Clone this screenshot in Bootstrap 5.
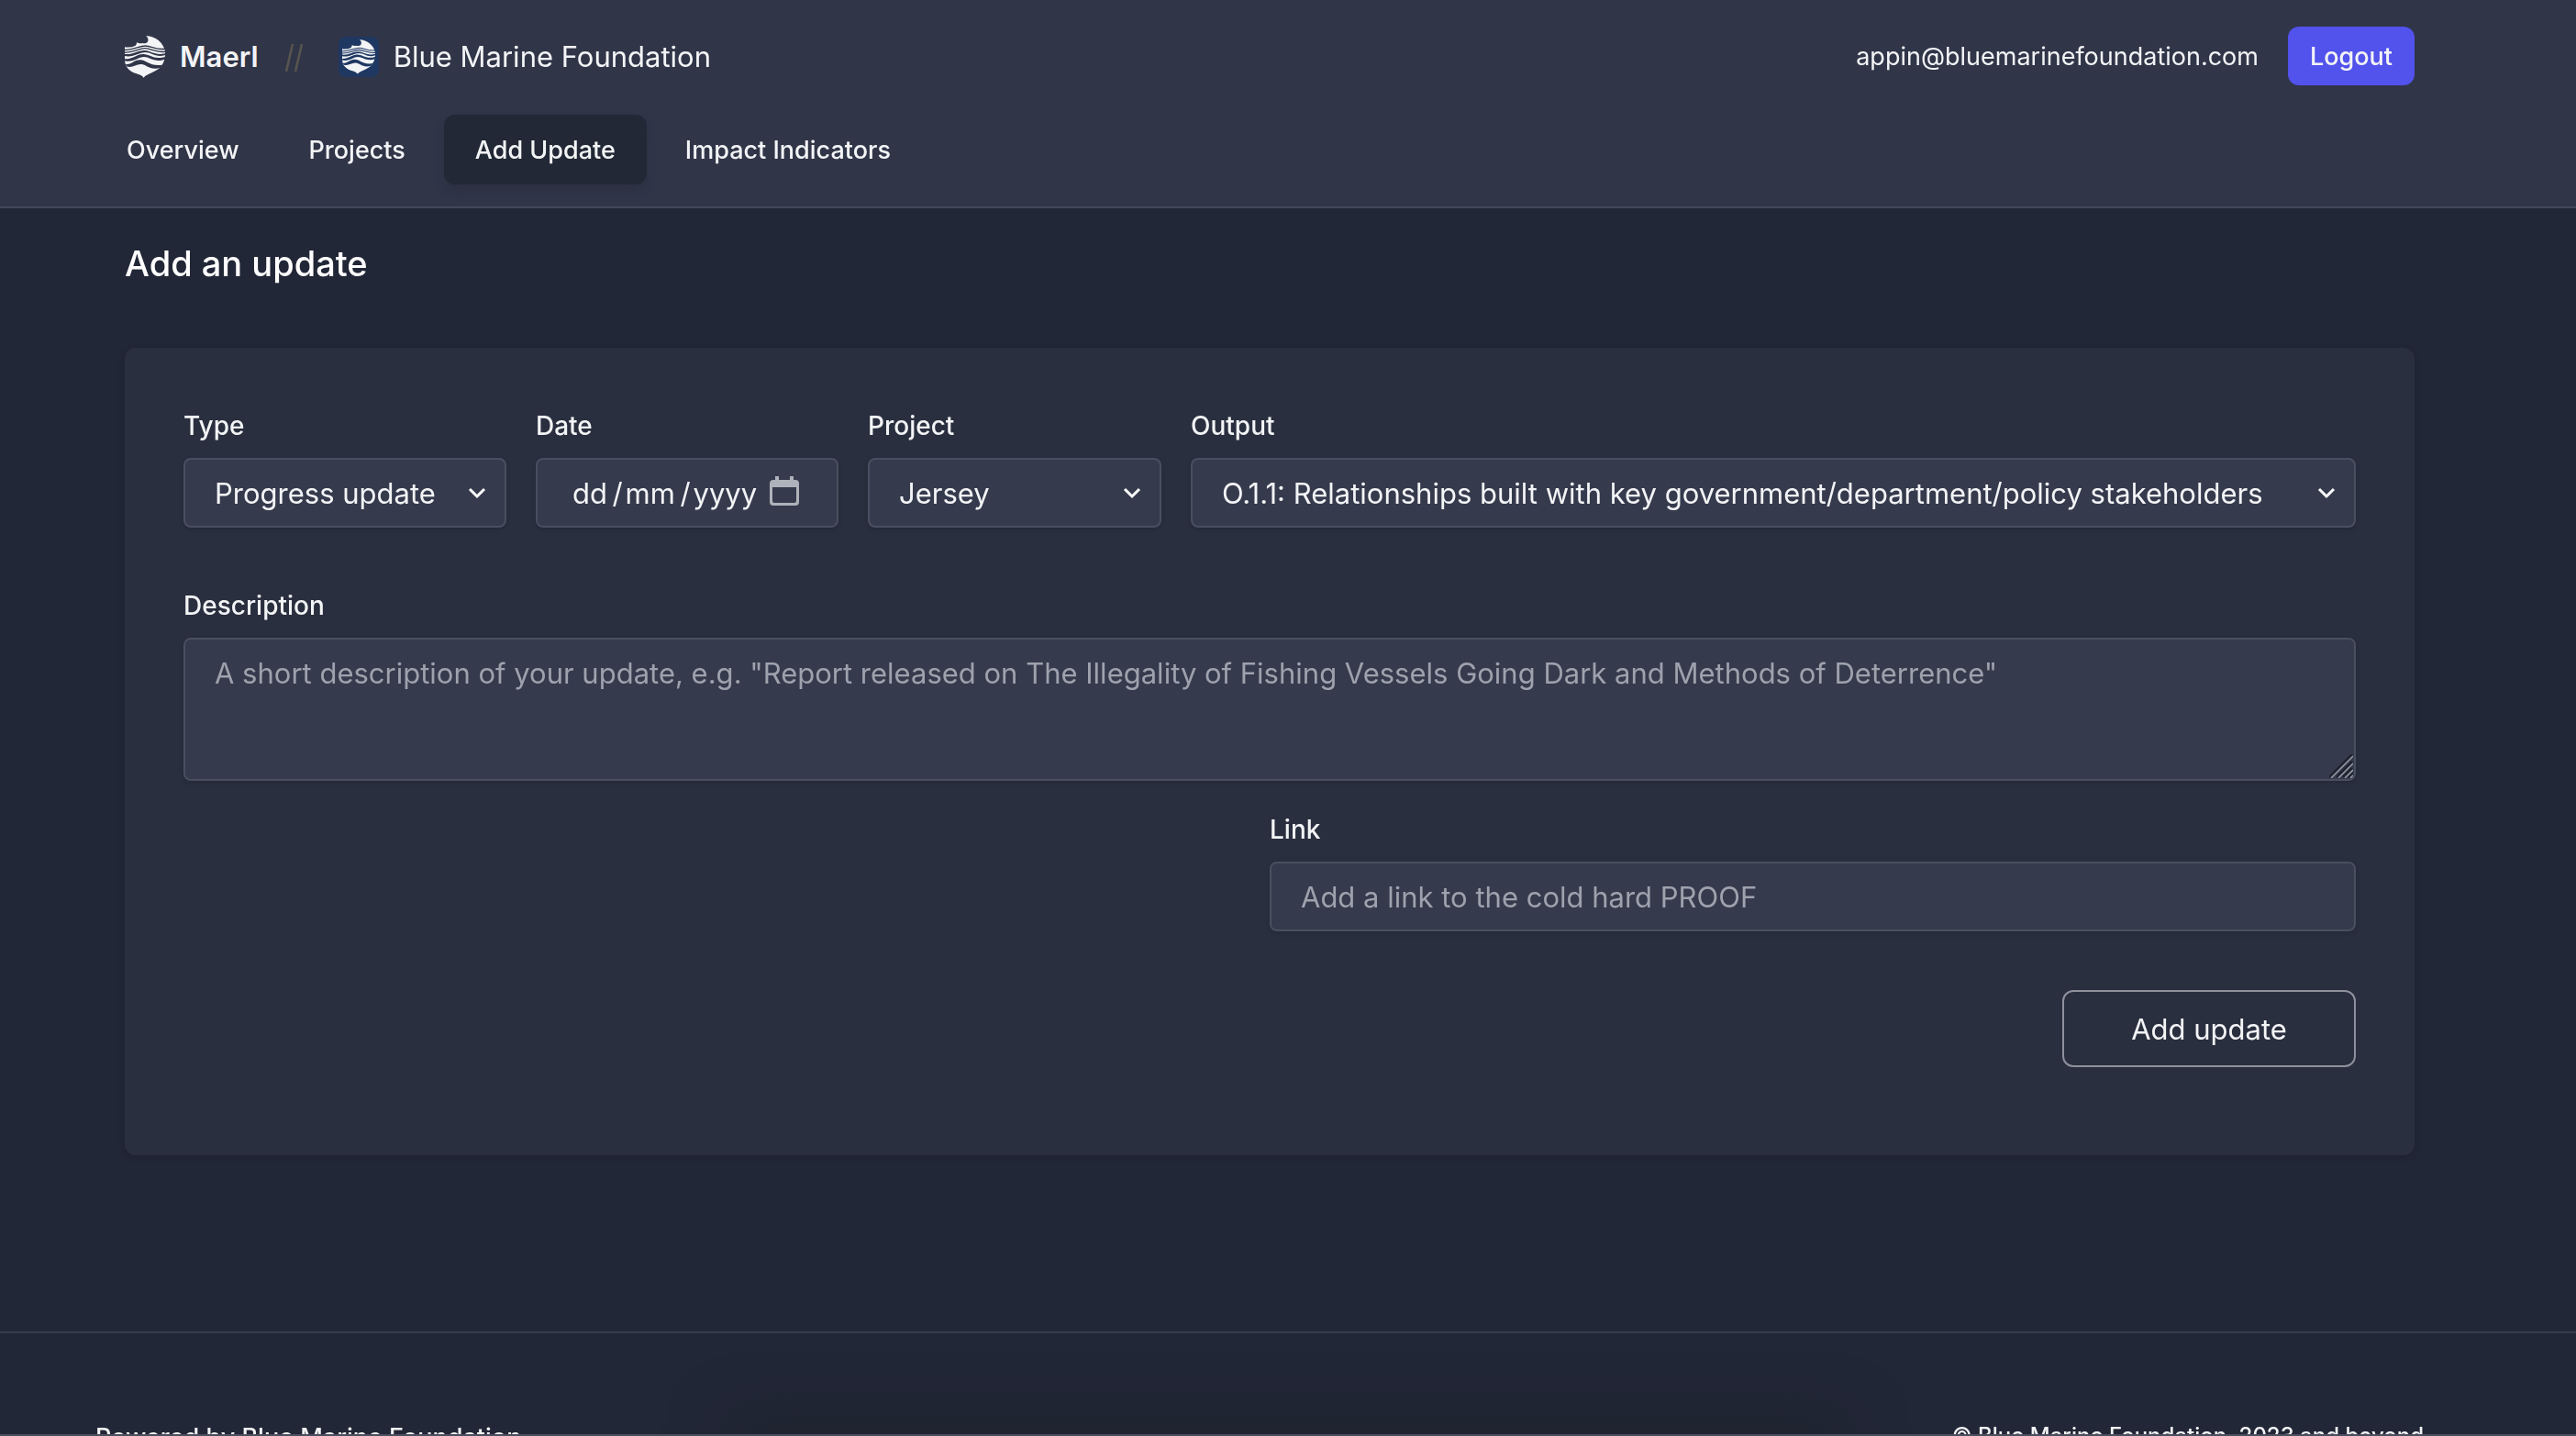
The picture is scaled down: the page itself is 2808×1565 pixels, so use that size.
<!DOCTYPE html>
<html lang="en-GB" data-bs-theme="dark">
<head>
<meta charset="utf-8">
<meta name="viewport" content="width=device-width, initial-scale=1">
<title>Add an update – Maerl</title>
<link href="https://cdn.jsdelivr.net/npm/bootstrap@5.3.0/dist/css/bootstrap.min.css" rel="stylesheet">
<style>
  body { background: #222737; color: #f3f4f6; font-family: Inter, "Noto Sans", sans-serif; font-size: 27px; line-height: 40px; }
  a { color: inherit; text-decoration: none; }
  .site-header { background: #303548; border-bottom: 2px solid #434859; padding: 29px 176px 24px 136px; }
  .top-bar { min-height: 64px; }
  .brand-text { font-size: 31px; gap: 16px; padding-top: 1px; }
  .brand-text svg { flex: none; }
  .separator { width: 20px; height: 32px; margin: 4px 38px 0 29px; }
  .user-bar { gap: 32px; }
  .user-email { padding-top: 2px; }
  .btn-logout { --bs-btn-color: #f3f4f6; --bs-btn-bg: #5252ec; --bs-btn-hover-bg: #4644dd; --bs-btn-hover-color: #fff; --bs-btn-border-width: 0; --bs-btn-border-radius: 12px; --bs-btn-font-size: 27px; --bs-btn-line-height: 40px; --bs-btn-font-weight: 500; --bs-btn-padding-x: 24px; padding-top: 13px; padding-bottom: 11px; }
  .main-tabs { gap: 8px; margin: 32px 0 0 -32px; font-weight: 500; }
  .main-tabs .nav-link { --bs-nav-pills-border-radius: 12px; --bs-nav-link-color: #f3f4f6; --bs-nav-link-hover-color: #fff; --bs-nav-pills-link-active-bg: #222835; --bs-nav-pills-link-active-color: #f3f4f6; padding: 19px 34px 17px; }
  .main-tabs .active { box-shadow: 0 8px 12px -2px rgba(34, 40, 53, .35); }
  main { padding: 36px 176px 192px 136px; }
  h1 { font-size: 38px; line-height: 48px; font-weight: 500; margin: 0 0 68px; }
  .panel { background: #2a2f3f; border-radius: 12px; padding: 64px 64px 96px; box-shadow: 0 2px 6px rgba(20, 24, 34, .3); }
  .form-grid { gap: 32px; margin-bottom: 64px; }
  .form-label { font-size: 28px; line-height: 40px; font-weight: 500; padding-top: 1px; margin-bottom: 15px; display: block; }
  .form-control, .form-select { background-color: #353a4d; border: 2px solid #4a4f60; border-radius: 8px; color: #f3f4f6; font-size: 31px; line-height: 48px; padding: 13px 32px 11px; box-shadow: 0 2px 4px rgba(20, 24, 34, .25); }
  .form-control:focus { background-color: #353a4d; color: #f3f4f6; }
  .form-control::placeholder { color: #9da2ad; }
  .form-select { padding-right: 68px; background-size: 24px 24px; background-position: right 18px center; background-image: url("data:image/svg+xml,%3Csvg xmlns='http://www.w3.org/2000/svg' viewBox='0 0 24 24'%3E%3Cpath fill='none' stroke='%23f8f9fa' stroke-width='3' d='M4 8l8 8 8-8'/%3E%3C/svg%3E"); }
  .field-type { flex: 352 1 0; }
  .field-date { flex: 330 1 0; }
  .field-project { flex: 320 1 0; }
  .field-output { flex: 1270 1 0; }
  .date-input { padding-left: 38px; padding-right: 76px; }
  .date-input::placeholder { color: #f3f4f6; opacity: 1; }
  .calendar-icon { position: absolute; right: 42px; top: 20px; }
  .description-input { height: 156px; resize: none; }
  .grip { position: absolute; right: 3px; bottom: 3px; }
  .link-row { margin-top: 32px; }
  .btn-add { --bs-btn-color: #f3f4f6; --bs-btn-border-color: #8e919c; --bs-btn-border-width: 2px; --bs-btn-border-radius: 12px; --bs-btn-hover-bg: #353a4d; --bs-btn-hover-color: #fff; --bs-btn-font-size: 31px; --bs-btn-line-height: 48px; padding-top: 17px; padding-bottom: 15px; width: 320px; margin-top: 64px; }
  .site-footer { border-top: 2px solid #383d4e; padding: 92px 166px 92px 104px; font-weight: 500; }
  .powered-by { padding-top: 2px; }
  .copyright { font-size: 24px; }
  .dock-shadow { left: 29%; right: 29%; height: 20px; margin-bottom: -20px; box-shadow: 0 0 64px 16px #1d232c; z-index: -1; }
  .window-edge { height: 2px; background: #4b4e5e; }
</style>
</head>
<body class="vh-100 overflow-hidden">
<svg class="d-none" aria-hidden="true">
  <symbol id="shell" viewBox="48 53 132 138">
    <path fill="currentColor" d="M48 90Q68 93 83 85Q88 80 87 74Q95 80 106 77Q116 80 122 74Q129 64 118 53C148 54 175 76 180 104Q182 132 167 153C152 173 119 176 110 190C101 177 78 179 63 165Q48 152 48 132Z"/>
    <g fill="none" stroke="var(--cut)">
      <path stroke-width="4" d="M48 99C77 101 94 86 115 86S148 100 180 96"/>
      <path stroke-width="4" d="M48 107C78 109 94 93 115 94S148 109 182 105"/>
    </g>
    <g fill="var(--cut)">
      <path d="M47 113C77 116 92 99 114 101S149 119 182 110V115C151 127 137 107 115 107S76 125 47 119Z"/>
      <path d="M47 129C76 130 87 112 109 113S145 133 182 121L179 130C145 142 130 122 111 122S75 142 48 135Z"/>
      <path d="M50 147C73 147 78 131 99 132S132 155 171 148L165 157C131 168 119 147 102 146S72 160 54 153Z"/>
    </g>
  </symbol>
</svg>

<header class="site-header">
  <div class="top-bar d-flex align-items-center justify-content-between">
    <div class="d-flex align-items-center">
      <a href="#" class="brand-text d-flex align-items-center fw-semibold">
        <svg width="44" height="46" style="--cut:#303548"><use href="#shell"/></svg>
        <span>Maerl</span>
      </a>
      <svg class="separator" viewBox="0 0 20 32" stroke="#57544f" stroke-width="2.6" aria-hidden="true"><path d="M1 31L8 1M11 31L18 1"/></svg>
      <a href="#" class="brand-text d-flex align-items-center">
        <svg width="44" height="44" viewBox="0 0 44 44" style="--cut:#1f3862"><rect width="44" height="44" rx="8" fill="#1f3862"/><use href="#shell" x="4" y="3" width="36" height="38"/></svg>
        <span>Blue Marine Foundation</span>
      </a>
    </div>
    <div class="user-bar d-flex align-items-center">
      <span class="user-email">appin@bluemarinefoundation.com</span>
      <button type="button" class="btn btn-logout">Logout</button>
    </div>
  </div>
  <nav class="main-tabs nav nav-pills" aria-label="Main">
    <a class="nav-link" href="#">Overview</a>
    <a class="nav-link" href="#">Projects</a>
    <a class="nav-link active" aria-current="page" href="#">Add Update</a>
    <a class="nav-link" href="#">Impact Indicators</a>
  </nav>
</header>

<main>
  <h1>Add an update</h1>
  <form class="panel">
    <div class="form-grid d-flex">
      <div class="field-type">
        <label class="form-label" for="type">Type</label>
        <select class="form-select" id="type"><option>Progress update</option></select>
      </div>
      <div class="field-date">
        <label class="form-label" for="date">Date</label>
        <div class="position-relative">
          <input class="form-control date-input" id="date" type="text" placeholder="dd&#8201;/&#8202;mm&#8201;/&#8202;yyyy">
          <svg class="calendar-icon" width="34" height="34" viewBox="0 0 34 34" fill="#afb2ba" aria-hidden="true"><path fill-rule="evenodd" d="M7 0h4v4h12V0h4v4h2a4 4 0 0 1 4 4v20a4 4 0 0 1-4 4H5a4 4 0 0 1-4-4V8a4 4 0 0 1 4-4h2ZM4 12v15a2 2 0 0 0 2 2h22a2 2 0 0 0 2-2V12Z"/></svg>
        </div>
      </div>
      <div class="field-project">
        <label class="form-label" for="project">Project</label>
        <select class="form-select" id="project"><option>Jersey</option></select>
      </div>
      <div class="field-output">
        <label class="form-label" for="output">Output</label>
        <select class="form-select" id="output"><option>O.1.1: Relationships built with key government/department/policy stakeholders</option></select>
      </div>
    </div>
    <label class="form-label" for="description">Description</label>
    <div class="position-relative">
      <textarea class="form-control description-input" id="description" placeholder='A short description of your update, e.g. "Report released on The Illegality of Fishing Vessels Going Dark and Methods of Deterrence"'></textarea>
      <svg class="grip" width="26" height="26" viewBox="0 0 26 26" fill="none" aria-hidden="true"><path stroke="#1f2430" stroke-width="2.5" d="M0 25L25 0M8 25L25 8M15 25L25 15M21 26L26 21"/><path stroke="#9a9ea8" stroke-width="1.5" d="M2 26L26 2M10 26L26 10M17 26L26 17M23 26L26 23"/></svg>
    </div>
    <div class="link-row row justify-content-end g-0">
      <div class="col-6">
        <label class="form-label" for="link">Link</label>
        <input class="form-control" id="link" type="text" placeholder="Add a link to the cold hard PROOF">
      </div>
    </div>
    <div class="d-flex justify-content-end">
      <button type="button" class="btn btn-add">Add update</button>
    </div>
  </form>
</main>

<footer class="site-footer d-flex justify-content-between">
  <span class="powered-by">Powered by Blue Marine Foundation</span>
  <span class="copyright">© Blue Marine Foundation, 2023 and beyond</span>
</footer>
<div class="dock-shadow position-fixed bottom-0"></div>
<div class="window-edge fixed-bottom"></div>
<script src="https://cdn.jsdelivr.net/npm/bootstrap@5.3.0/dist/js/bootstrap.bundle.min.js"></script>
</body>
</html>
